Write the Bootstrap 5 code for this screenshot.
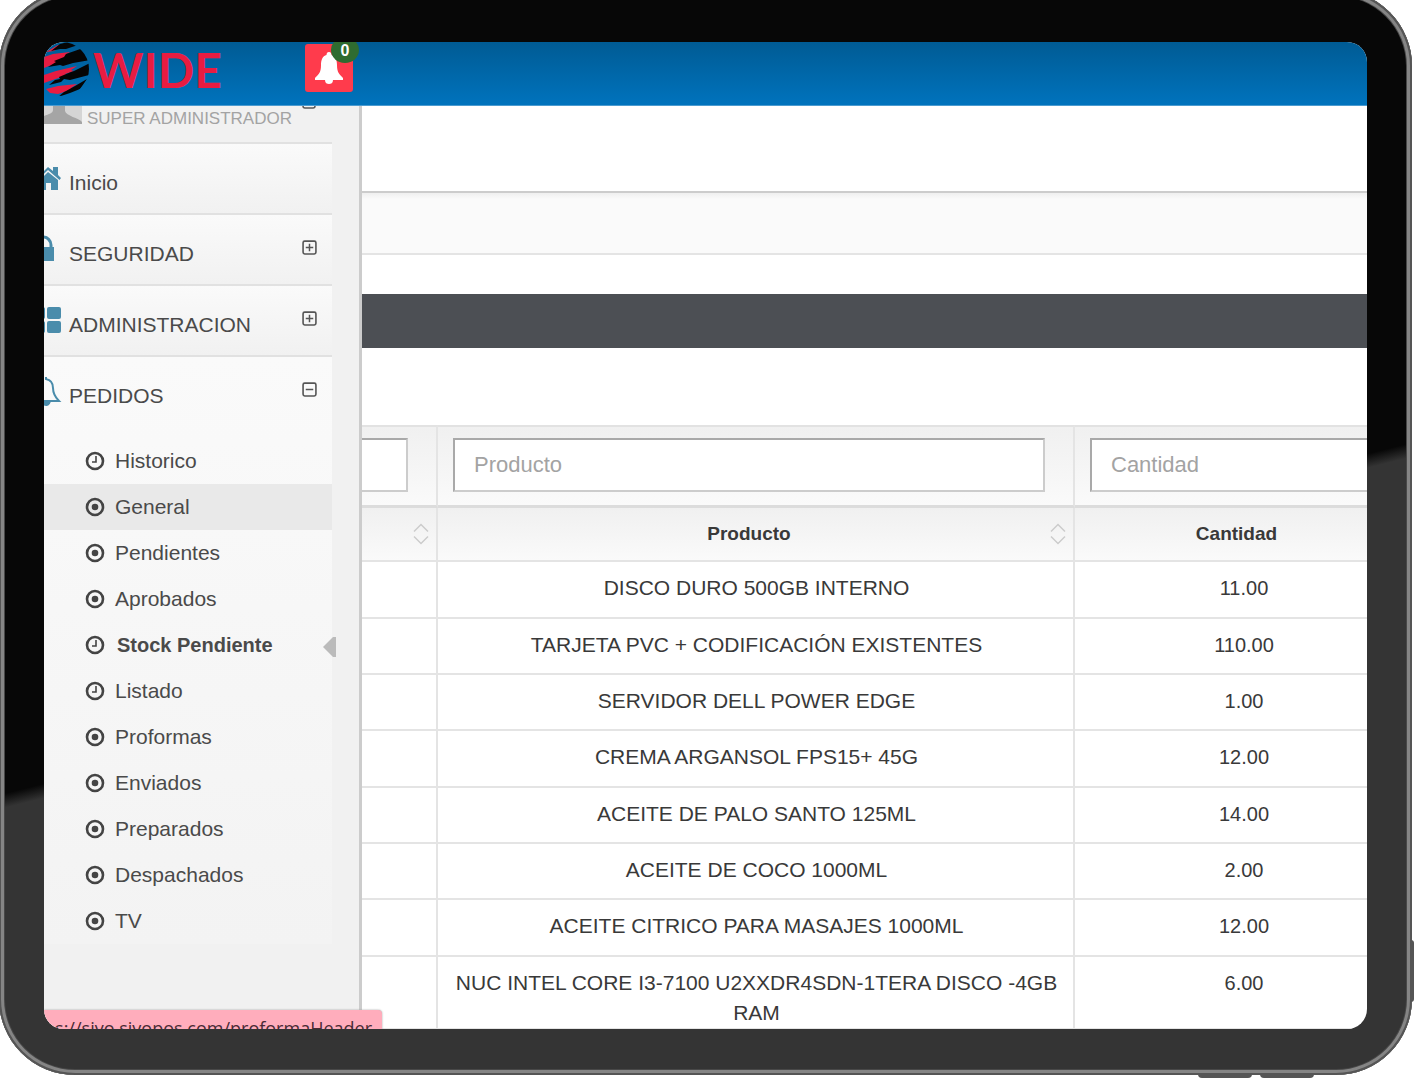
<!DOCTYPE html>
<html lang="es">
<head>
<meta charset="utf-8">
<meta name="viewport" content="width=device-width, initial-scale=1">
<title>Wide - Stock Pendiente</title>
<link href="https://cdn.jsdelivr.net/npm/bootstrap@5.3.0/dist/css/bootstrap.min.css" rel="stylesheet">
<style>
body{font-family:"Liberation Sans",Arial,sans-serif;font-size:21px;line-height:30px;color:#393939;background:#fff}
.tablet{margin:-10px 5px 5px -1px;padding:52px 45px 46px;border-radius:76px;min-height:0;
  background:linear-gradient(166deg,#070707 56%,#343434 57%);
  box-shadow:inset 0 0 0 2px #555,inset 0 0 0 5px #858585,inset 0 0 0 6px #484848}
.side-key,.edge-key{position:absolute;background:#555}
.side-key{right:-2px;bottom:73px;width:3px;height:62px;border-radius:0 3px 3px 0}
.edge-key{bottom:-3px;width:54px;height:4px;border-radius:0 0 5px 5px}
.key-a{right:160px}.key-b{right:98px}
.screen{border-radius:20px;background:#fff;min-height:0}
.topbar{height:64px;background:linear-gradient(#005b94,#0073bd);border-bottom:1px solid #4b9bd0}
.brand{width:261px;gap:3px;color:#e81c41;text-decoration:none;font:bold 48px/56px Lato,sans-serif}
.alert-btn{width:48px;height:48px;margin-top:2px;border:0;border-radius:3px;background:#ff3b4c;padding:0}
.count{top:-7px;right:-6px;width:28px;height:26px;border-radius:50%;background:#2f6c30;color:#fff;font:bold 16px/28px "Liberation Sans",sans-serif}
.sidebar{width:318px;background:#f1f1f1;border-right:3px solid #ccc;padding-right:27px}
.sidebar a{color:#4a4a4a;text-decoration:none}
.user{height:38px;font-size:17px;line-height:26px;gap:5px;border-bottom:2px solid #e1e1e1}
.user span{color:#a3a3a3;margin-right:4px}
.entry{height:71px;padding:24px 15px 0 0;border-bottom:2px solid #e1e1e1;background:linear-gradient(#fafafa,#f1f1f1)}
.entry svg.ico{width:20px;height:30px;margin:-5px 5px 0 0;color:#4a8cab;overflow:hidden}
.entry .toggle{margin:1px 0 0 auto}
.open-group{background:linear-gradient(#fafafa,#f3f3f3)}
.open-group>.entry{height:81px;border:0;background:none}
.sub a{height:46px;padding-left:41px;gap:10px}
.sub .hot{background:#e9e9e9}
.sub .current{font-weight:bold;font-size:20px;gap:12px}
.caret{right:-4px;top:15px}
.link-tip{left:0;bottom:0;width:338px;height:19px;padding-right:10px;background:#ffadbc;border-radius:0 4px 0 0;box-shadow:0 0 2px #999;font:18px/36px "Open Sans",sans-serif;color:#4a2a35;white-space:nowrap}
.strip-a{height:87px;border-bottom:2px solid #ccc}
.strip-b{height:62px;background:linear-gradient(#efefef,#fafafa 6px);border-bottom:2px solid #e4e4e4}
.strip-c{height:54px;margin-top:39px;margin-bottom:77px;background:#4c4f54}
.grid{width:calc(100% + 46px);table-layout:fixed;border-collapse:separate;border-spacing:0;text-align:center}
.grid .c1{width:76px}.grid .c3{width:338px}
.grid td,.grid th{border-right:2px solid #e4e4e4;border-bottom:2px solid #e4e4e4;padding:0}
.filters td{height:83px;padding:0 28px 2px 15px;border-top:2px solid #e2e2e2;border-bottom:3px solid #dcdcdc!important;background:linear-gradient(#f0f0f0,#fafafa)}
.filters td:first-child{padding-left:0}
.filters td:first-child input{border-left:0}
.filters input{display:block;width:100%;height:54px;padding:0 19px;border:2px solid;border-color:#a9a9a9 #ccc #ccc #a9a9a9;border-radius:0;font-size:22px;background:#fff}
.filters input::placeholder{color:#a3a3a3}
.heads th{height:54px;padding:0 7px 0 10px;font-size:19px;background:linear-gradient(#f0f0f0,#fafafa)}
.grid tbody td{height:56px;padding:11px 8px 0 10px;vertical-align:top}
.grid tbody tr:nth-child(3n+1) td{height:57px}
.grid tbody td:last-child{font-size:20px}
</style>
<script src="https://cdn.jsdelivr.net/npm/bootstrap@5.3.0/dist/js/bootstrap.bundle.min.js"></script>
</head>
<body class="vh-100 overflow-hidden d-flex flex-column">
<svg class="d-none">
  <symbol id="clock" viewBox="0 0 20 20"><circle cx="10" cy="10" r="8" fill="none" stroke="#444" stroke-width="2.6"/><path d="M11 5v6H7" fill="none" stroke="#444" stroke-width="1.6"/></symbol>
  <symbol id="dot" viewBox="0 0 20 20"><circle cx="10" cy="10" r="8" fill="none" stroke="#444" stroke-width="2.6"/><circle cx="10" cy="10" r="3.3" fill="#444"/></symbol>
  <symbol id="plus" viewBox="0 0 14 14"><rect x="1" y="1" width="12" height="12" rx="1.5" fill="none" stroke="#555" stroke-width="1.5"/><path d="M3.5 7h7M7 3.5v7" stroke="#555" stroke-width="1.4"/></symbol>
  <symbol id="minus" viewBox="0 0 14 14"><rect x="1" y="1" width="12" height="12" rx="1.5" fill="none" stroke="#555" stroke-width="1.5"/><path d="M3.5 7h7" stroke="#555" stroke-width="1.4"/></symbol>
  <symbol id="sort" viewBox="0 0 16 22"><path d="M1 8.500l7-7 7 7M1 13.500l7 7 7-7" fill="none" stroke="#ccc" stroke-width="1.5"/></symbol>
</svg>
<div class="tablet position-relative flex-grow-1 d-flex flex-column">
  <div class="screen position-relative overflow-hidden flex-grow-1 d-flex flex-column">
    <header class="topbar d-flex align-items-start flex-shrink-0">
      <a class="brand d-flex" href="#">
        <svg width="46" height="56" viewBox="0 0 46 56" aria-hidden="true">
          <defs><clipPath id="ball"><circle cx="18" cy="27" r="27"/></clipPath></defs>
          <g clip-path="url(#ball)">
            <path fill="#e81c41" d="M2 10L14 3h4L10 9zM0 15l9-3 17-2-5 3 3 1-8 3 4 1L0 26zM0 33l12-4 21-5-6 4 3 1-9 3 2 1L0 41zM2 47l12-3 19-2-6 4 1 1-8 3-6 2-8-1z"/>
            <path fill="#050505" d="M7 9l9-7 8-2 10 3-12 4-6 0zM4 25l8-5-2-1 10-4 2-3L42 5l4 13-17 3-10 3-3-1zM46 21l-1 12-19 5-6-1-3 3-12 3 6-5 5-1-1-2 12-5 3-1zM43 37l-7 10-10 4-12 4 6-5 2-1 9-5z"/>
          </g>
        </svg>WIDE</a>
      <button class="alert-btn position-relative" type="button" aria-label="Notificaciones">
        <svg width="30" height="34" viewBox="0 0 30 34"><path fill="#fff" d="M15 1c-2 0-2.500 1.500-2.500 3C8.500 5 7 9 7 14c0 7-2 9-6 13v2h10c0 3 2 4 4 4s4-1 4-4h10v-2c-4-4-6-6-6-13 0-5-1.500-9-5.500-10C17.500 2.500 17 1 15 1z"/></svg>
        <span class="count position-absolute">0</span>
      </button>
    </header>
    <div class="d-flex flex-grow-1 overflow-hidden">
      <nav class="sidebar flex-shrink-0">
        <div class="user d-flex align-items-start">
          <svg width="38" height="18" viewBox="0 0 38 18"><path fill="#d5d5d5" d="M0 0h38v18H0z"/><path fill="#a5a5a5" d="M9 0h12v5c1 5 14 7 17 11v2H0v-8c5-2 9-3 9-6z"/></svg>
          <span>SUPER ADMINISTRADOR</span>
          <svg width="16" height="3" viewBox="0 0 16 3"><path d="M2 0q0 2 2 2h8q2 0 2-2" fill="none" stroke="#555" stroke-width="1.500"/></svg>
        </div>
        <a class="entry d-flex align-items-start" href="#"><svg class="ico" viewBox="0 0 20 30"><path fill="currentColor" d="M-10 18L4 4l5 4V4h5v8l3 3-1.500 2L4 7l-12 11zM-5 18L4 9l10 8v10H7v-7H2v7h-7z"/></svg>Inicio</a>
        <a class="entry d-flex align-items-start" href="#"><svg class="ico" viewBox="0 0 20 30"><path fill="currentColor" d="M-12 13h22v14h-22z"/><path d="M-8 14v-3a8 8 0 0 1 16 0v3" transform="translate(-1)" fill="none" stroke="currentColor" stroke-width="3"/></svg>SEGURIDAD<svg class="toggle" width="15" height="15"><use href="#plus"/></svg></a>
        <a class="entry d-flex align-items-start" href="#"><svg class="ico" viewBox="0 0 20 30"><g fill="currentColor"><rect x="-12" y="2" width="13" height="12" rx="2"/><rect x="-12" y="16" width="13" height="12" rx="2"/><rect x="3" y="2" width="14" height="12" rx="2"/><rect x="3" y="16" width="14" height="12" rx="2"/></g></svg>ADMINISTRACION<svg class="toggle" width="15" height="15"><use href="#plus"/></svg></a>
        <div class="open-group">
          <a class="entry d-flex align-items-start" href="#"><svg class="ico" viewBox="0 0 20 30"><path fill="none" stroke="currentColor" stroke-width="2" d="M2 1v2c5 1 7 4 7 9 0 6 2 9 6 13H-12"/><path fill="currentColor" d="M-3 25H7c-1 4-3 5-5 5s-4-1-5-5z"/></svg>PEDIDOS<svg class="toggle" width="15" height="15"><use href="#minus"/></svg></a>
          <div class="sub">
            <a class="d-flex align-items-center" href="#"><svg width="20" height="20"><use href="#clock"/></svg>Historico</a>
            <a class="d-flex align-items-center hot" href="#"><svg width="20" height="20"><use href="#dot"/></svg>General</a>
            <a class="d-flex align-items-center" href="#"><svg width="20" height="20"><use href="#dot"/></svg>Pendientes</a>
            <a class="d-flex align-items-center" href="#"><svg width="20" height="20"><use href="#dot"/></svg>Aprobados</a>
            <a class="d-flex align-items-center current position-relative" href="#" aria-current="page"><svg width="20" height="20"><use href="#clock"/></svg>Stock Pendiente<svg class="caret position-absolute" width="13" height="20"><path fill="#bbb" d="M0 10L10 0h3v20h-3z"/></svg></a>
            <a class="d-flex align-items-center" href="#"><svg width="20" height="20"><use href="#clock"/></svg>Listado</a>
            <a class="d-flex align-items-center" href="#"><svg width="20" height="20"><use href="#dot"/></svg>Proformas</a>
            <a class="d-flex align-items-center" href="#"><svg width="20" height="20"><use href="#dot"/></svg>Enviados</a>
            <a class="d-flex align-items-center" href="#"><svg width="20" height="20"><use href="#dot"/></svg>Preparados</a>
            <a class="d-flex align-items-center" href="#"><svg width="20" height="20"><use href="#dot"/></svg>Despachados</a>
            <a class="d-flex align-items-center" href="#"><svg width="20" height="20"><use href="#dot"/></svg>TV</a>
          </div>
        </div>
      </nav>
      <main class="flex-grow-1 overflow-hidden">
        <div class="strip-a"></div>
        <div class="strip-b"></div>
        <div class="strip-c"></div>
        <table class="grid">
          <colgroup><col class="c1"><col><col class="c3"></colgroup>
          <thead>
            <tr class="filters"><td><input type="text" aria-label="Filtro"></td><td><input type="text" placeholder="Producto" aria-label="Producto"></td><td><input type="text" placeholder="Cantidad" aria-label="Cantidad"></td></tr>
            <tr class="heads">
              <th><div class="d-flex justify-content-end"><svg width="16" height="22"><use href="#sort"/></svg></div></th>
              <th><div class="d-flex align-items-center"><span class="flex-grow-1">Producto</span><svg width="16" height="22"><use href="#sort"/></svg></div></th>
              <th><div class="d-flex align-items-center"><span class="flex-grow-1">Cantidad</span><svg width="16" height="22"><use href="#sort"/></svg></div></th>
            </tr>
          </thead>
          <tbody>
            <tr><td></td><td>DISCO DURO 500GB INTERNO</td><td>11.00</td></tr>
            <tr><td></td><td>TARJETA PVC + CODIFICACIÓN EXISTENTES</td><td>110.00</td></tr>
            <tr><td></td><td>SERVIDOR DELL POWER EDGE</td><td>1.00</td></tr>
            <tr><td></td><td>CREMA ARGANSOL FPS15+ 45G</td><td>12.00</td></tr>
            <tr><td></td><td>ACEITE DE PALO SANTO 125ML</td><td>14.00</td></tr>
            <tr><td></td><td>ACEITE DE COCO 1000ML</td><td>2.00</td></tr>
            <tr><td></td><td>ACEITE CITRICO PARA MASAJES 1000ML</td><td>12.00</td></tr>
            <tr><td></td><td>NUC INTEL CORE I3-7100 U2XXDR4SDN-1TERA DISCO -4GB RAM</td><td>6.00</td></tr>
          </tbody>
        </table>
      </main>
    </div>
    <div class="link-tip position-absolute overflow-hidden d-flex justify-content-end">s://sivo.sivopos.com/proformaHeader</div>
  </div>
  <span class="side-key"></span><span class="edge-key key-a"></span><span class="edge-key key-b"></span>
</div>
</body>
</html>
